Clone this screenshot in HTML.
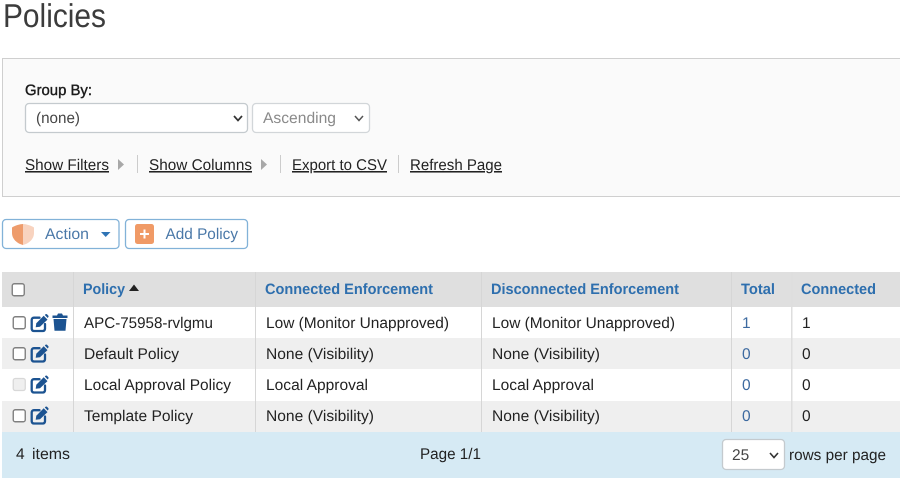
<!DOCTYPE html>
<html>
<head>
<meta charset="utf-8">
<style>
html,body{margin:0;padding:0;background:#fff;width:900px;height:478px;overflow:hidden}
svg{display:block}
text{font-family:"Liberation Sans",sans-serif;font-size:15.5px;fill:#222;text-rendering:geometricPrecision}
.h{font-weight:bold;fill:#2e6fae;font-size:15px}
.l{text-decoration:underline}
.b{fill:#4a78a8}
.n{fill:#3d6aa0}
</style>
</head>
<body>
<svg width="900" height="478" viewBox="0 0 900 478" xmlns="http://www.w3.org/2000/svg">
<defs>
<g id="edit" fill="none" stroke="#1c5391">
<path d="M9 3.200H3.400C2.100 3.200 1.200 4.100 1.200 5.400V14.300C1.200 15.600 2.100 16.500 3.400 16.500H12.300C13.600 16.500 14.500 15.600 14.500 14.300V9.500" stroke-width="2.300" stroke-linecap="round"/>
<path d="M5.200 12.800L5.800 8.700L13.200 1.300L17 5.100L9.500 12.300Z" fill="#1c5391" stroke="none"/>
<path d="M14.300 0.500L15 -0.200C15.500 -.6 16 -.6 16.500 -.2L17.800 1.100C18.200 1.600 18.200 2.100 17.800 2.600L17.200 3.500Z" fill="#1c5391" stroke="none"/>
</g>
<g id="cb"><rect x="0.750" y="0.750" width="12" height="12" rx="2" fill="#fff" stroke="#808080" stroke-width="1.400"/></g>
</defs>

<rect width="900" height="478" fill="#fff"/>
<text x="3" y="27" style="font-size:33px;fill:#3c3c3c" textLength="103" lengthAdjust="spacingAndGlyphs">Policies</text>

<rect x="2.500" y="58.500" width="900" height="138" fill="#fafafa" stroke="#cfcfcf"/>
<text x="25" y="95" style="font-size:15px;fill:#1a1a1a;stroke:#1a1a1a;stroke-width:.4" textLength="67" lengthAdjust="spacingAndGlyphs">Group By:</text>

<rect x="25.500" y="103.500" width="222" height="29" rx="3.500" fill="#fff" stroke="#c4cace" stroke-width="1.300"/>
<text x="36" y="123" style="fill:#444" textLength="44" lengthAdjust="spacingAndGlyphs">(none)</text>
<path d="M234 116L238 120.500L242 116" fill="none" stroke="#333" stroke-width="1.700"/>

<rect x="252.500" y="103.500" width="117" height="29" rx="3.500" fill="#fff" stroke="#d2d6d9" stroke-width="1.300"/>
<text x="263" y="123" style="fill:#8a8a8a" textLength="73" lengthAdjust="spacingAndGlyphs">Ascending</text>
<path d="M355 116L359 120.500L363 116" fill="none" stroke="#555" stroke-width="1.500"/>

<text x="25" y="170" class="l" textLength="84" lengthAdjust="spacingAndGlyphs">Show Filters</text>
<path d="M118 159L124 164.500L118 170Z" fill="#a8a8a8"/>
<rect x="137" y="155" width="1" height="18" fill="#ccc"/>
<text x="149" y="170" class="l" textLength="103" lengthAdjust="spacingAndGlyphs">Show Columns</text>
<path d="M261 159L267 164.500L261 170Z" fill="#a8a8a8"/>
<rect x="280" y="155" width="1" height="18" fill="#ccc"/>
<text x="292" y="170" class="l" textLength="95" lengthAdjust="spacingAndGlyphs">Export to CSV</text>
<rect x="398" y="155" width="1" height="18" fill="#ccc"/>
<text x="410" y="170" class="l" textLength="92" lengthAdjust="spacingAndGlyphs">Refresh Page</text>

<rect x="2.500" y="219.500" width="116.500" height="29" rx="3.500" fill="#fff" stroke="#82b2d8" stroke-width="1.300"/>
<path d="M23 224C20 224 15 225.500 12 227.500V233C12 239 17 243.500 23 245Z" fill="#ee9c6c"/>
<path d="M23 224C26 224 31 225.500 34 227.500V233C34 239 29 243.500 23 245Z" fill="#f8d3bf"/>
<text x="45" y="239" class="b" textLength="44" lengthAdjust="spacingAndGlyphs">Action</text>
<path d="M101 232H110.500L105.700 237Z" fill="#2f74b5"/>

<rect x="125.500" y="219.500" width="122" height="29" rx="3.500" fill="#fff" stroke="#82b2d8" stroke-width="1.300"/>
<rect x="135" y="224" width="19" height="20" rx="2.500" fill="#f09a66"/>
<path d="M144.500 229.500V238.500M140 234H149" stroke="#fff" stroke-width="2"/>
<text x="165.500" y="239" class="b" textLength="72.500" lengthAdjust="spacingAndGlyphs">Add Policy</text>

<!-- table -->
<rect x="2" y="272" width="898" height="35" fill="#dfdfdf"/>
<rect x="2" y="307" width="898" height="31" fill="#fff"/>
<rect x="2" y="338" width="898" height="31" fill="#efefef"/>
<rect x="2" y="369" width="898" height="32" fill="#fff"/>
<rect x="2" y="401" width="898" height="31" fill="#efefef"/>
<g fill="#d6d6d6">
<rect x="73" y="272" width="1" height="160"/>
<rect x="255" y="272" width="1" height="160"/>
<rect x="481" y="272" width="1" height="160"/>
<rect x="731" y="272" width="1" height="160"/>
<rect x="791" y="272" width="1.500" height="160" fill="#dedede"/>
</g>
<rect x="2" y="432" width="898" height="46" fill="#d6eaf4"/>

<use href="#cb" x="11.500" y="283"/>
<text x="83" y="294" class="h" textLength="42" lengthAdjust="spacingAndGlyphs">Policy</text>
<path d="M129 291L134 284.500L139 291Z" fill="#222"/>
<text x="265" y="294" class="h" textLength="168" lengthAdjust="spacingAndGlyphs">Connected Enforcement</text>
<text x="491" y="294" class="h" textLength="188" lengthAdjust="spacingAndGlyphs">Disconnected Enforcement</text>
<text x="741" y="294" class="h" textLength="34" lengthAdjust="spacingAndGlyphs">Total</text>
<text x="801" y="294" class="h" textLength="75" lengthAdjust="spacingAndGlyphs">Connected</text>

<!-- row 1 -->
<use href="#cb" x="12.500" y="316"/>
<use href="#edit" x="30.500" y="314.500"/>
<path d="M52.500 315.500H57L58 313.500H62L63 315.500H67.500V318H52.500ZM53.500 319H66.500L65.500 330.800H54.500Z" fill="#1c5391"/>
<text x="84" y="328" textLength="129" lengthAdjust="spacingAndGlyphs">APC-75958-rvlgmu</text>
<text x="266" y="328" textLength="183" lengthAdjust="spacingAndGlyphs">Low (Monitor Unapproved)</text>
<text x="492" y="328" textLength="183" lengthAdjust="spacingAndGlyphs">Low (Monitor Unapproved)</text>
<text x="742" y="328" class="n">1</text>
<text x="802" y="328">1</text>

<!-- row 2 -->
<use href="#cb" x="12.500" y="347"/>
<use href="#edit" x="30.500" y="345"/>
<text x="84" y="359" textLength="95" lengthAdjust="spacingAndGlyphs">Default Policy</text>
<text x="266" y="359" textLength="108" lengthAdjust="spacingAndGlyphs">None (Visibility)</text>
<text x="492" y="359" textLength="108" lengthAdjust="spacingAndGlyphs">None (Visibility)</text>
<text x="742" y="359" class="n">0</text>
<text x="802" y="359">0</text>

<!-- row 3 -->
<rect x="13.250" y="378.500" width="12" height="12" rx="2" fill="#efefef" stroke="#d8d8d8" stroke-width="1.300"/>
<use href="#edit" x="30.500" y="376"/>
<text x="84" y="390" textLength="147" lengthAdjust="spacingAndGlyphs">Local Approval Policy</text>
<text x="266" y="390" textLength="102" lengthAdjust="spacingAndGlyphs">Local Approval</text>
<text x="492" y="390" textLength="102" lengthAdjust="spacingAndGlyphs">Local Approval</text>
<text x="742" y="390" class="n">0</text>
<text x="802" y="390">0</text>

<!-- row 4 -->
<use href="#cb" x="12.500" y="409"/>
<use href="#edit" x="30.500" y="407"/>
<text x="84" y="421" textLength="109" lengthAdjust="spacingAndGlyphs">Template Policy</text>
<text x="266" y="421" textLength="108" lengthAdjust="spacingAndGlyphs">None (Visibility)</text>
<text x="492" y="421" textLength="108" lengthAdjust="spacingAndGlyphs">None (Visibility)</text>
<text x="742" y="421" class="n">0</text>
<text x="802" y="421">0</text>

<!-- footer -->
<text x="16" y="459">4</text>
<text x="32" y="459" textLength="38" lengthAdjust="spacingAndGlyphs">items</text>
<text x="420" y="459" textLength="61" lengthAdjust="spacingAndGlyphs">Page 1/1</text>
<rect x="722.500" y="439.500" width="62" height="30" rx="3.500" fill="#fff" stroke="#c4cace" stroke-width="1.300"/>
<text x="732" y="460" style="fill:#444">25</text>
<path d="M770 453L774 457.500L778 453" fill="none" stroke="#333" stroke-width="1.600"/>
<text x="789" y="460" textLength="97" lengthAdjust="spacingAndGlyphs">rows per page</text>
</svg>
</body>
</html>
